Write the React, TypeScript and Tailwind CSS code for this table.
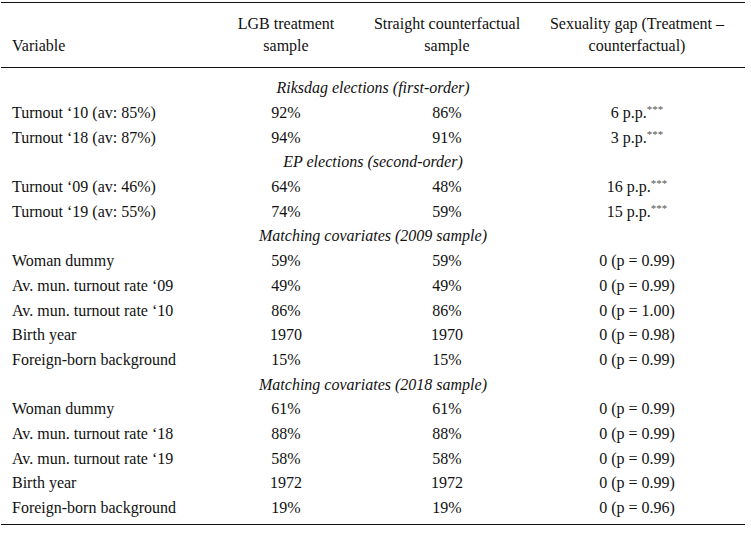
type Row = { label: string; lgb: string; straight: string; gap: string; stars?: boolean }

type Section = { title: string; rows: Row[] }

const sections: Section[] = [
  {
    title: 'Riksdag elections (first-order)',
    rows: [
      { label: 'Turnout ‘10 (av: 85%)', lgb: '92%', straight: '86%', gap: '6 p.p.', stars: true },
      { label: 'Turnout ‘18 (av: 87%)', lgb: '94%', straight: '91%', gap: '3 p.p.', stars: true },
    ],
  },
  {
    title: 'EP elections (second-order)',
    rows: [
      { label: 'Turnout ‘09 (av: 46%)', lgb: '64%', straight: '48%', gap: '16 p.p.', stars: true },
      { label: 'Turnout ‘19 (av: 55%)', lgb: '74%', straight: '59%', gap: '15 p.p.', stars: true },
    ],
  },
  {
    title: 'Matching covariates (2009 sample)',
    rows: [
      { label: 'Woman dummy', lgb: '59%', straight: '59%', gap: '0 (p = 0.99)' },
      { label: 'Av. mun. turnout rate ‘09', lgb: '49%', straight: '49%', gap: '0 (p = 0.99)' },
      { label: 'Av. mun. turnout rate ‘10', lgb: '86%', straight: '86%', gap: '0 (p = 1.00)' },
      { label: 'Birth year', lgb: '1970', straight: '1970', gap: '0 (p = 0.98)' },
      { label: 'Foreign-born background', lgb: '15%', straight: '15%', gap: '0 (p = 0.99)' },
    ],
  },
  {
    title: 'Matching covariates (2018 sample)',
    rows: [
      { label: 'Woman dummy', lgb: '61%', straight: '61%', gap: '0 (p = 0.99)' },
      { label: 'Av. mun. turnout rate ‘18', lgb: '88%', straight: '88%', gap: '0 (p = 0.99)' },
      { label: 'Av. mun. turnout rate ‘19', lgb: '58%', straight: '58%', gap: '0 (p = 0.99)' },
      { label: 'Birth year', lgb: '1972', straight: '1972', gap: '0 (p = 0.99)' },
      { label: 'Foreign-born background', lgb: '19%', straight: '19%', gap: '0 (p = 0.96)' },
    ],
  },
]

const cols = 'grid grid-cols-[220px_130px_192px_188px]'

export default function App() {
  return (
    <div className="w-[751px] h-[533px] bg-white text-[#111] font-['Liberation_Serif',serif] text-[16px] pt-[2px]">
      <div className="w-[744px] ml-px border-t-[1.5px] border-b-[1.5px] border-[#111]">
        {/* Header */}
        <div className={`${cols} items-end leading-[22px] pt-[10px] pb-[10px] border-b-[1.5px] border-[#111]`}>
          <div className="pl-[11px]">Variable</div>
          <div className="text-center">LGB treatment<br />sample</div>
          <div className="text-center">Straight counterfactual<br />sample</div>
          <div className="text-center whitespace-nowrap">Sexuality gap (Treatment –<br />counterfactual)</div>
        </div>

        {/* Body */}
        <div className="pt-[8px] pb-[4px]">
          {sections.map((s) => (
            <div key={s.title}>
              <div className="h-[24.7px] flex items-center justify-center italic">{s.title}</div>
              {s.rows.map((r, i) => (
                <div key={i} className={`${cols} h-[24.7px] items-center`}>
                  <div className="pl-[11px] whitespace-nowrap">{r.label}</div>
                  <div className="text-center">{r.lgb}</div>
                  <div className="text-center">{r.straight}</div>
                  <div className="text-center whitespace-nowrap">
                    {r.gap}
                    {r.stars && <sup className="text-[11px] text-[#555] relative -top-[5px]">***</sup>}
                  </div>
                </div>
              ))}
            </div>
          ))}
        </div>
      </div>
    </div>
  )
}
